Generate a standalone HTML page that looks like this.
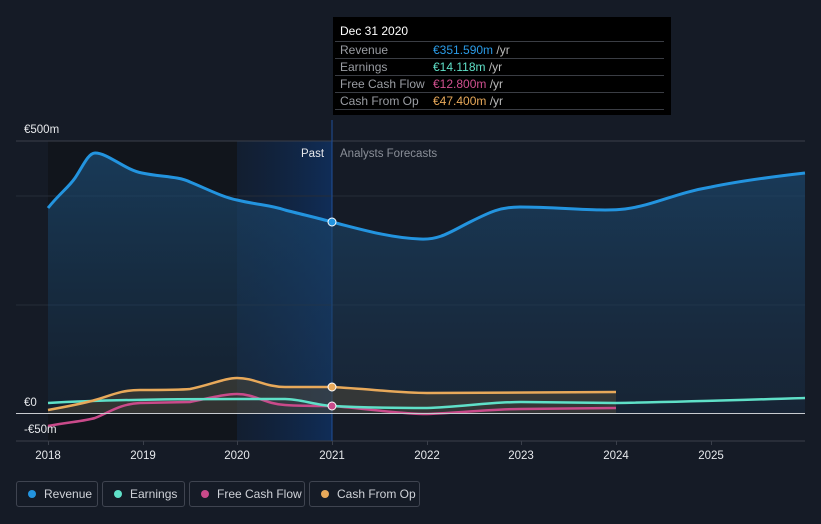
<!DOCTYPE html>
<html><head><meta charset="utf-8"><style>
html,body{margin:0;padding:0;background:#151b26;width:821px;height:524px;overflow:hidden;font-family:"Liberation Sans",sans-serif}
.tt{position:absolute;left:333px;top:17px;width:338px;height:98px;background:#000;color:#fff;font-size:12px}
.tt .h{position:absolute;left:7px;top:7px;font-size:12px}
.tt .r{position:absolute;left:2px;width:329px;border-top:1px solid #3a3d44;height:16px}
.tt .r span{position:absolute;top:1px;white-space:nowrap}
.tt .l{left:5px;color:#9a9da3}
.tt .v{left:98px}
.lg{position:absolute;top:481px;height:26px;border:1px solid #3f4450;border-radius:3px;color:#cfd2d8;font-size:12px;box-sizing:border-box;line-height:24px;white-space:nowrap}
.lg i{position:absolute;left:11px;top:8px;width:8px;height:8px;border-radius:50%}
.lg span{position:absolute;left:27px}
</style></head><body>
<svg width="821" height="524" style="position:absolute;left:0;top:0">
<defs>
<linearGradient id="pg" x1="0" x2="1"><stop offset="0" stop-color="#0e2340" stop-opacity="0.4"/><stop offset="1" stop-color="#0f3060" stop-opacity="0.85"/></linearGradient>
<linearGradient id="rf" x1="0" y1="0" x2="0" y2="1"><stop offset="0" stop-color="#1b4a72" stop-opacity="0.7"/><stop offset="1" stop-color="#1b3550" stop-opacity="0.35"/></linearGradient>
</defs>
<rect x="48" y="141" width="189" height="300" fill="#11151c"/>
<rect x="237" y="141" width="95" height="300" fill="url(#pg)"/>
<line x1="16" y1="141" x2="805" y2="141" stroke="#3a3f4a"/>
<line x1="16" y1="196" x2="805" y2="196" stroke="#252c38"/>
<line x1="16" y1="305" x2="805" y2="305" stroke="#252c38"/>
<line x1="16" y1="441" x2="805" y2="441" stroke="#3a3f4a"/>
<line x1="332" y1="120" x2="332" y2="441" stroke="#1f4f9a"/>
<path d="M48,208 C60,193 68,188 75,178 C82,168 88,153 95,153 C108,153 125,170 142,173 C160,177 178,176 190,182 C205,188 222,197 237,200 C258,205 270,205 285,210 C300,214 318,218 332,222 C360,229 390,238 420,239 C440,240 450,232 470,222 C490,212 500,207 520,207 C560,207 600,212 625,209 C655,205 675,193 711,187 C740,181 770,177 805,173 L805,413 L48,413 Z" fill="url(#rf)"/>
<path d="M48,410 C70,406 85,403 95,400 C110,396 120,390 140,390 C160,390 180,390 190,389 C210,385 225,378 237,378 C255,378 265,387 285,387 L332,387 C370,389 400,393 427,393 L616,392 L616,413 L48,413Z" fill="#6b5a3a" fill-opacity="0.35"/>
<path d="M48,426 C70,422 85,421 95,418 C110,412 120,404 140,403 L190,402 C210,398 225,394 237,394 C255,394 265,404 285,405 C300,406 318,406 332,406 C370,409 400,414 427,414 C460,413 490,409 521,409 L616,408" fill="none" stroke="#c94a8a" stroke-width="2.5"/>
<path d="M48,403 C100,400 180,399 237,399 L285,399 C300,399 315,405 332,406 C370,408 400,408 427,408 C460,407 490,402 521,402 L616,403 C680,402 740,400 805,398" fill="none" stroke="#5fe0c8" stroke-width="2.5"/>
<path d="M48,410 C70,406 85,403 95,400 C110,396 120,390 140,390 C160,390 180,390 190,389 C210,385 225,378 237,378 C255,378 265,387 285,387 L332,387 C370,389 400,393 427,393 L616,392" fill="none" stroke="#e8a95a" stroke-width="2.5"/>
<line x1="16" y1="413.5" x2="805" y2="413.5" stroke="#c8cbd0"/>
<path d="M48,208 C60,193 68,188 75,178 C82,168 88,153 95,153 C108,153 125,170 142,173 C160,177 178,176 190,182 C205,188 222,197 237,200 C258,205 270,205 285,210 C300,214 318,218 332,222 C360,229 390,238 420,239 C440,240 450,232 470,222 C490,212 500,207 520,207 C560,207 600,212 625,209 C655,205 675,193 711,187 C740,181 770,177 805,173" fill="none" stroke="#2394df" stroke-width="3"/>
<circle cx="332" cy="222" r="4" fill="#2394df" stroke="#fff" stroke-width="1"/>
<circle cx="332" cy="387" r="4" fill="#e8a95a" stroke="#fff" stroke-width="1"/>
<circle cx="332" cy="406" r="4" fill="#c94a8a" stroke="#fff" stroke-width="1"/>
<g fill="#3a3f4a"><rect x="48" y="441" width="1" height="4"/><rect x="143" y="441" width="1" height="4"/><rect x="237" y="441" width="1" height="4"/><rect x="332" y="441" width="1" height="4"/><rect x="427" y="441" width="1" height="4"/><rect x="521" y="441" width="1" height="4"/><rect x="616" y="441" width="1" height="4"/><rect x="711" y="441" width="1" height="4"/></g>
<g font-family="Liberation Sans,sans-serif" font-size="11.5" fill="#e6e8eb" text-anchor="middle">
<text x="48" y="459">2018</text><text x="143" y="459">2019</text><text x="237" y="459">2020</text><text x="332" y="459">2021</text><text x="427" y="459">2022</text><text x="521" y="459">2023</text><text x="616" y="459">2024</text><text x="711" y="459">2025</text>
</g>
<g font-family="Liberation Sans,sans-serif" font-size="11.5" fill="#e6e8eb">
<text x="24" y="133">€500m</text><text x="24" y="406">€0</text><text x="24" y="433">-€50m</text>
<text x="301" y="157">Past</text><text x="340" y="157" fill="#8a8f98">Analysts Forecasts</text>
</g>
</svg>
<div class="tt">
<div class="h">Dec 31 2020</div>
<div class="r" style="top:24px"><span class="l">Revenue</span><span class="v" style="color:#2a9ae6">€351.590m <b style="font-weight:normal;color:#bbb">/yr</b></span></div>
<div class="r" style="top:41px"><span class="l">Earnings</span><span class="v" style="color:#5fe0c8">€14.118m <b style="font-weight:normal;color:#bbb">/yr</b></span></div>
<div class="r" style="top:58px"><span class="l">Free Cash Flow</span><span class="v" style="color:#d0508f">€12.800m <b style="font-weight:normal;color:#bbb">/yr</b></span></div>
<div class="r" style="top:75px"><span class="l">Cash From Op</span><span class="v" style="color:#e8a95a">€47.400m <b style="font-weight:normal;color:#bbb">/yr</b></span></div>
<div class="r" style="top:92px;height:0"></div>
</div>
<div class="lg" style="left:16px;width:82px"><i style="background:#2394df"></i><span>Revenue</span></div>
<div class="lg" style="left:102px;width:83px"><i style="background:#5fe0c8"></i><span>Earnings</span></div>
<div class="lg" style="left:189px;width:116px"><i style="background:#c94a8a"></i><span>Free Cash Flow</span></div>
<div class="lg" style="left:309px;width:111px"><i style="background:#e8a95a"></i><span>Cash From Op</span></div>
</body></html>
